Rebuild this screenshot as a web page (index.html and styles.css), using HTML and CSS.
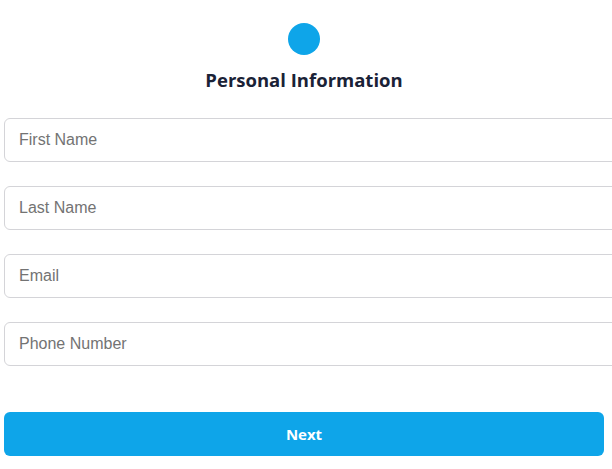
FILE: index.html
```html
<!DOCTYPE html>
<html>
<head>
<meta charset="utf-8">
<link rel="stylesheet" href="styles.css">
</head>
<body>
<div class="page">
  <div class="header">
    <div class="dot"></div>
    <h2 class="title">Personal Information</h2>
  </div>
  <form class="form">
    <input class="field" type="text" placeholder="First Name">
    <input class="field" type="text" placeholder="Last Name">
    <input class="field" type="email" placeholder="Email">
    <input class="field" type="tel" placeholder="Phone Number">
    <button class="next" type="button">Next</button>
  </form>
</div>
</body>
</html>
```

FILE: styles.css
```css
html, body {
  margin: 0;
  padding: 0;
  background: #ffffff;
  overflow: hidden;
}
.page {
  width: 600px;
  padding: 0 4px;
}
.header {
  display: flex;
  flex-direction: column;
  align-items: center;
  padding-top: 23px;
}
.dot {
  width: 32px;
  height: 32px;
  border-radius: 50%;
  background: #0ea5e9;
}
.title {
  margin: 12px 0 0 0;
  font-family: "Open Sans", "Noto Sans", sans-serif;
  font-weight: 700;
  font-size: 18.5px;
  line-height: 26px;
  color: #1a2236;
}
.form {
  display: flex;
  flex-direction: column;
  align-items: flex-start;
  margin-top: 25px;
}
.field {
  box-sizing: content-box;
  width: 600px;
  flex-shrink: 0;
  height: 18px;
  padding: 12px 14px;
  margin: 0 0 24px 0;
  border: 1px solid #d4d4d8;
  border-radius: 6px;
  font-family: "Liberation Sans", Arial, sans-serif;
  font-size: 16px;
  color: #333;
  outline: none;
}
.field::placeholder {
  color: #737373;
}
.next {
  margin-top: 22px;
  width: 600px;
  height: 44px;
  border: none;
  border-radius: 6px;
  background: #0ea5e9;
  color: #ffffff;
  font-family: "Open Sans", "Noto Sans", sans-serif;
  font-weight: 700;
  font-size: 15px;
}
```
